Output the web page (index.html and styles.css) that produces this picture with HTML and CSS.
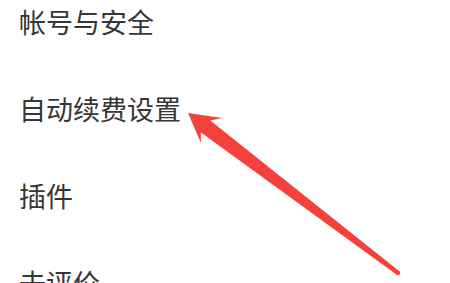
FILE: index.html
```html
<!DOCTYPE html>
<html lang="zh-CN">
<head>
<meta charset="utf-8">
<title>设置</title>
<link rel="stylesheet" href="styles.css">
</head>
<body>
<div class="page">
  <ul class="menu">
    <li class="item">帐号与安全</li>
    <li class="item">自动续费设置</li>
    <li class="item">插件</li>
    <li class="item">去评价</li>
  </ul>
  <svg class="arrow" width="450" height="283" viewBox="0 0 450 283" aria-hidden="true">
    <polygon fill="#f5413b" points="188,113 222,118 210.3,120.4 399.3,271.3 396.7,274.7 200.7,132.2 201,143"/>
    <circle fill="#f5413b" cx="398" cy="273" r="2.2"/>
  </svg>
</div>
</body>
</html>
```

FILE: styles.css
```css
html, body {
  margin: 0;
  padding: 0;
  background: #ffffff;
}
.page {
  position: relative;
  width: 450px;
  height: 283px;
  overflow: hidden;
}
.menu {
  list-style: none;
  margin: 0;
  padding: 2px 0 0 19px;
  display: flex;
  flex-direction: column;
  gap: 47px;
}
.item {
  font-family: "Noto Sans CJK SC", "Noto Sans", sans-serif;
  font-size: 27px;
  line-height: 40px;
  height: 40px;
  color: #363636;
  white-space: nowrap;
}
.arrow {
  position: absolute;
  left: 0;
  top: 0;
}
```
